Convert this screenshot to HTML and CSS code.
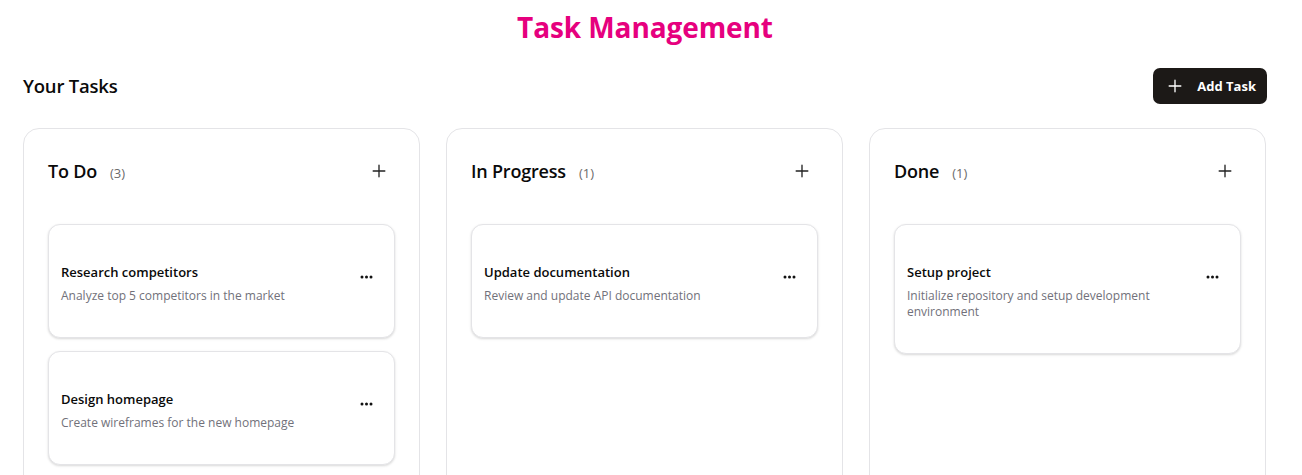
FILE: index.html
```html
<!DOCTYPE html>
<html lang="en">
<head>
<meta charset="utf-8">
<title>Task Management</title>
<link rel="stylesheet" href="styles.css">
</head>
<body>
<div class="page">
  <h1 class="title">Task Management</h1>
  <div class="toolbar">
    <h2 class="subtitle">Your Tasks</h2>
    <button class="add-btn">
      <svg class="icon-plus" width="20" height="20" viewBox="0 0 24 24" fill="none" stroke="currentColor" stroke-width="1.6" stroke-linecap="round"><path d="M5 12h14M12 5v14"/></svg>
      <span>Add Task</span>
    </button>
  </div>
  <div class="board">
    <section class="column">
      <div class="col-header">
        <div class="col-title"><span class="col-name">To Do</span><span class="col-count">(3)</span></div>
        <button class="icon-btn"><svg width="20" height="20" viewBox="0 0 24 24" fill="none" stroke="currentColor" stroke-width="1.6" stroke-linecap="round"><path d="M5 12h14M12 5v14"/></svg></button>
      </div>
      <div class="cards">
        <div class="card">
          <div class="card-body">
            <div class="card-title">Research competitors</div>
            <div class="card-desc">Analyze top 5 competitors in the market</div>
          </div>
          <button class="dots-btn"><svg width="13" height="4" viewBox="0 0 13 4"><circle cx="2" cy="2" r="1.5"/><circle cx="6.5" cy="2" r="1.5"/><circle cx="11" cy="2" r="1.5"/></svg></button>
        </div>
        <div class="card">
          <div class="card-body">
            <div class="card-title">Design homepage</div>
            <div class="card-desc">Create wireframes for the new homepage</div>
          </div>
          <button class="dots-btn"><svg width="13" height="4" viewBox="0 0 13 4"><circle cx="2" cy="2" r="1.5"/><circle cx="6.5" cy="2" r="1.5"/><circle cx="11" cy="2" r="1.5"/></svg></button>
        </div>
        <div class="card">
          <div class="card-body">
            <div class="card-title">Write user stories</div>
            <div class="card-desc">Define user stories for the next sprint</div>
          </div>
          <button class="dots-btn"><svg width="13" height="4" viewBox="0 0 13 4"><circle cx="2" cy="2" r="1.5"/><circle cx="6.5" cy="2" r="1.5"/><circle cx="11" cy="2" r="1.5"/></svg></button>
        </div>
      </div>
    </section>
    <section class="column">
      <div class="col-header">
        <div class="col-title"><span class="col-name">In Progress</span><span class="col-count">(1)</span></div>
        <button class="icon-btn"><svg width="20" height="20" viewBox="0 0 24 24" fill="none" stroke="currentColor" stroke-width="1.6" stroke-linecap="round"><path d="M5 12h14M12 5v14"/></svg></button>
      </div>
      <div class="cards">
        <div class="card">
          <div class="card-body">
            <div class="card-title">Update documentation</div>
            <div class="card-desc">Review and update API documentation</div>
          </div>
          <button class="dots-btn"><svg width="13" height="4" viewBox="0 0 13 4"><circle cx="2" cy="2" r="1.5"/><circle cx="6.5" cy="2" r="1.5"/><circle cx="11" cy="2" r="1.5"/></svg></button>
        </div>
      </div>
    </section>
    <section class="column">
      <div class="col-header">
        <div class="col-title"><span class="col-name">Done</span><span class="col-count">(1)</span></div>
        <button class="icon-btn"><svg width="20" height="20" viewBox="0 0 24 24" fill="none" stroke="currentColor" stroke-width="1.6" stroke-linecap="round"><path d="M5 12h14M12 5v14"/></svg></button>
      </div>
      <div class="cards">
        <div class="card">
          <div class="card-body">
            <div class="card-title">Setup project</div>
            <div class="card-desc">Initialize repository and setup development environment</div>
          </div>
          <button class="dots-btn"><svg width="13" height="4" viewBox="0 0 13 4"><circle cx="2" cy="2" r="1.5"/><circle cx="6.5" cy="2" r="1.5"/><circle cx="11" cy="2" r="1.5"/></svg></button>
        </div>
      </div>
    </section>
  </div>
</div>
</body>
</html>
```

FILE: styles.css
```css
* { box-sizing: border-box; }

body {
  margin: 0;
  background: #ffffff;
  color: #0a0a0a;
  font-family: "Open Sans", "Noto Sans", "Liberation Sans", sans-serif;
}

.page {
  width: 1302px;
  padding: 0 35px 0 23px;
}

.title {
  margin: 0;
  padding-top: 10px;
  font-size: 28px;
  line-height: 34px;
  font-weight: 700;
  color: #e6007e;
  text-align: center;
  letter-spacing: -0.1px;
}

.toolbar {
  display: flex;
  justify-content: space-between;
  align-items: center;
  margin-top: 24px;
  height: 36px;
}

.subtitle {
  margin: 0;
  font-size: 18.5px;
  font-weight: 600;
  line-height: 26px;
  letter-spacing: -0.2px;
}

.add-btn {
  display: inline-flex;
  align-items: center;
  gap: 12px;
  height: 36px;
  padding: 0 11px 0 12px;
  border: none;
  border-radius: 7px;
  background: #1c1917;
  color: #ffffff;
  font-family: inherit;
  font-size: 13px;
  font-weight: 700;
  white-space: nowrap;
}

.board {
  display: grid;
  grid-template-columns: repeat(3, 397px);
  gap: 26px;
  margin-top: 24px;
}

.column {
  border: 1px solid #e4e4e7;
  border-radius: 16px;
  padding: 23px 24px 40px;
  min-height: 420px;
}

.col-header {
  display: flex;
  justify-content: space-between;
  align-items: center;
  height: 38px;
}

.col-title {
  display: flex;
  align-items: baseline;
  gap: 13px;
}

.col-name {
  font-size: 18px;
  font-weight: 600;
  letter-spacing: -0.2px;
}

.col-count {
  font-size: 13px;
  color: #6b6b6b;
}

.icon-btn {
  display: flex;
  align-items: center;
  justify-content: center;
  width: 32px;
  height: 32px;
  padding: 0;
  border: none;
  background: transparent;
  color: #222;
}

.cards {
  display: flex;
  flex-direction: column;
  gap: 13px;
  margin-top: 34px;
}

.card {
  display: flex;
  align-items: flex-start;
  justify-content: space-between;
  border: 1px solid #e4e4e7;
  border-radius: 12px;
  padding: 37px 12px 33px 12px;
  box-shadow: 0 1px 3px rgba(0, 0, 0, 0.1), 0 1px 2px rgba(0, 0, 0, 0.06);
  background: #fff;
}

.card-body {
  width: 270px;
}

.card-title {
  font-size: 13px;
  font-weight: 600;
  line-height: 20px;
}

.card-desc {
  margin-top: 6px;
  font-size: 12px;
  line-height: 16px;
  color: #71717a;
}

.dots-btn {
  display: flex;
  align-items: center;
  justify-content: center;
  width: 32px;
  height: 30px;
  padding: 0;
  border: none;
  background: transparent;
  fill: #111;
}
```
